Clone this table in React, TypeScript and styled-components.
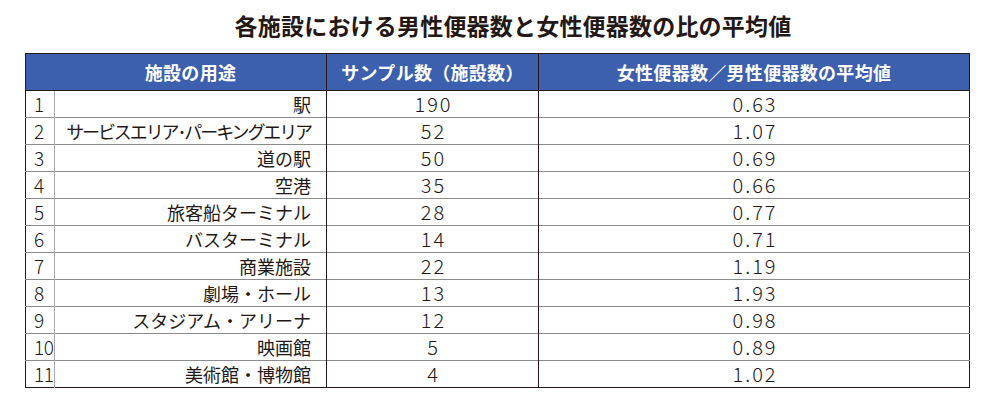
import React from "react";
import styled, { createGlobalStyle } from "styled-components";

const GlobalStyle = createGlobalStyle`
  html, body {
    margin: 0;
    padding: 0;
    background: #ffffff;
  }
  body {
    font-family: "Noto Sans CJK JP", "Noto Sans", sans-serif;
    color: #231815;
  }
`;

const Page = styled.div`
  width: 1000px;
  height: 410px;
  padding-top: 11px;
  box-sizing: border-box;
`;

const Title = styled.h1`
  margin: 0 0 13px 0;
  padding-left: 26px;
  text-align: center;
  font-size: 23px;
  line-height: 29px;
  font-weight: 700;
  color: #231815;
  letter-spacing: 0.2px;
`;

const Table = styled.table`
  margin-left: 25px;
  width: 944px;
  border-collapse: collapse;
  table-layout: fixed;
  border: 1.5px solid #231815;
`;

const HeadCell = styled.th<{ $indent?: number }>`
  height: 36px;
  padding: 0 0 0 ${(p) => p.$indent ?? 0}px;
  background: #3c5fae;
  color: #ffffff;
  font-size: 18px;
  font-weight: 700;
  text-align: center;
  border-left: 1.5px solid #231815;
  border-bottom: 1.5px solid #231815;
  letter-spacing: 0.3px;
`;

const Row = styled.tr`
  height: 27px;
  & + & td {
    border-top: 1px solid #8c8c8c;
  }
`;

const NumCell = styled.td`
  padding: 0 0 0 8px;
  font-size: 19px;
  font-weight: 300;
  line-height: 26px;
  color: #231815;
  letter-spacing: -0.5px;
  white-space: nowrap;
`;

const PurposeCell = styled.td<{ $tight?: boolean }>`
  padding: 0 15px 0 0;
  text-align: right;
  font-size: 18px;
  line-height: 26px;
  color: #231815;
  border-left: 1px solid #a8a8a8;
  white-space: nowrap;
  letter-spacing: ${(p) => (p.$tight ? "-2.1px" : "0")};
`;

const ValueCell = styled.td`
  padding: 0 0 0 2px;
  text-align: center;
  font-size: 20px;
  font-weight: 300;
  line-height: 26px;
  color: #231815;
  border-left: 1.5px solid #231815;
  letter-spacing: 2px;
`;

type Facility = {
  purpose: string;
  samples: number;
  ratio: string;
};

const facilities: Facility[] = [
  { purpose: "駅", samples: 190, ratio: "0.63" },
  { purpose: "サービスエリア･パーキングエリア", samples: 52, ratio: "1.07" },
  { purpose: "道の駅", samples: 50, ratio: "0.69" },
  { purpose: "空港", samples: 35, ratio: "0.66" },
  { purpose: "旅客船ターミナル", samples: 28, ratio: "0.77" },
  { purpose: "バスターミナル", samples: 14, ratio: "0.71" },
  { purpose: "商業施設", samples: 22, ratio: "1.19" },
  { purpose: "劇場・ホール", samples: 13, ratio: "1.93" },
  { purpose: "スタジアム・アリーナ", samples: 12, ratio: "0.98" },
  { purpose: "映画館", samples: 5, ratio: "0.89" },
  { purpose: "美術館・博物館", samples: 4, ratio: "1.02" },
];

function App() {
  return (
    <Page>
      <GlobalStyle />
      <Title>各施設における男性便器数と女性便器数の比の平均値</Title>
      <Table>
        <colgroup>
          <col style={{ width: 29 }} />
          <col style={{ width: 272 }} />
          <col style={{ width: 212 }} />
          <col style={{ width: 431 }} />
        </colgroup>
        <thead>
          <tr>
            <HeadCell colSpan={2} $indent={29}>
              施設の用途
            </HeadCell>
            <HeadCell>サンプル数（施設数）</HeadCell>
            <HeadCell>女性便器数／男性便器数の平均値</HeadCell>
          </tr>
        </thead>
        <tbody>
          {facilities.map((f, i) => (
            <Row key={f.purpose}>
              <NumCell>{i + 1}</NumCell>
              <PurposeCell $tight={f.purpose.length > 12}>{f.purpose}</PurposeCell>
              <ValueCell>{f.samples}</ValueCell>
              <ValueCell>{f.ratio}</ValueCell>
            </Row>
          ))}
        </tbody>
      </Table>
    </Page>
  );
}

export default App;
